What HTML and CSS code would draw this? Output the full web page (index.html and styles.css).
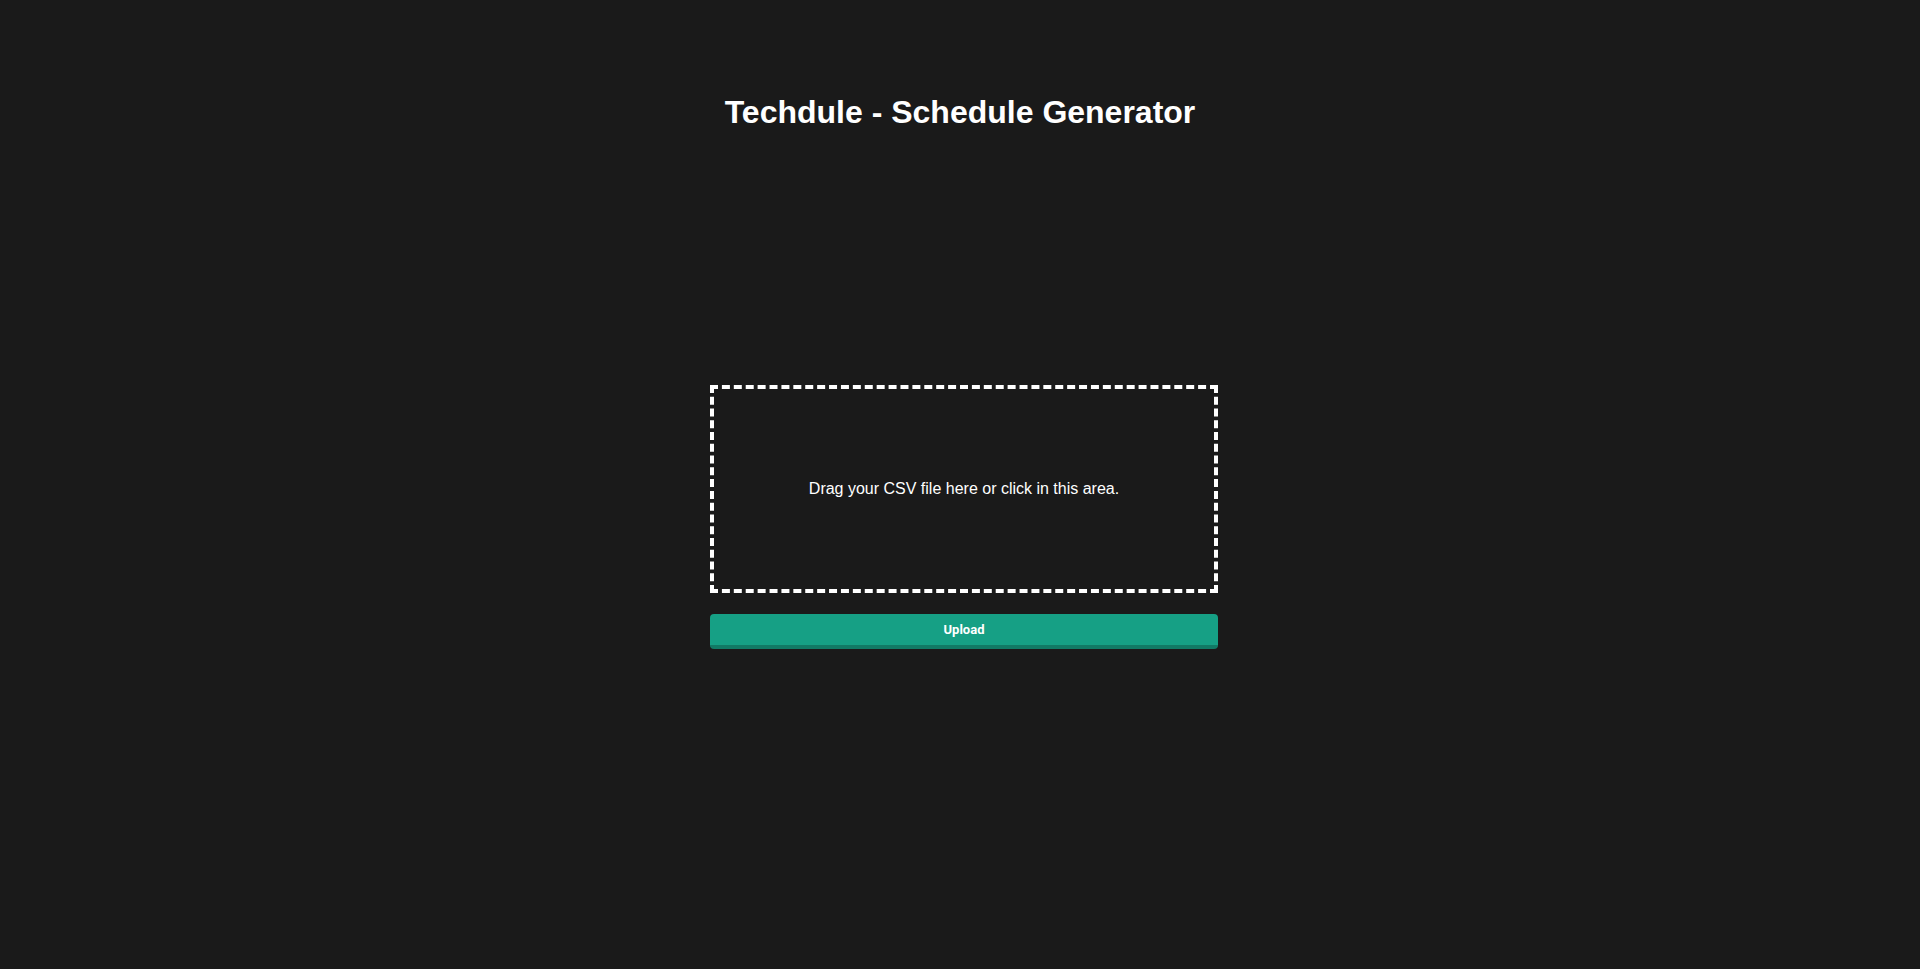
FILE: index.html
```html
<!DOCTYPE html>
<html lang="en">
<head>
<meta charset="utf-8">
<title>Techdule - Schedule Generator</title>
<link rel="stylesheet" href="styles.css">
</head>
<body>
<h1 class="title">Techdule - Schedule Generator</h1>
<form class="upload-form">
  <div class="dropzone">
    <p class="dropzone-text">Drag your CSV file here or click in this area.</p>
  </div>
  <button type="button" class="upload-btn">Upload</button>
</form>
</body>
</html>
```
FILE: styles.css
```css
html, body {
  margin: 0;
  padding: 0;
  background: #1a1a1a;
  color: #ffffff;
  font-family: "Liberation Sans", Arial, sans-serif;
}
body {
  padding-top: 94px;
  min-height: 969px;
  box-sizing: border-box;
}
.title {
  margin: 0;
  text-align: center;
  font-size: 32px;
  line-height: 37px;
  font-weight: bold;
}
.upload-form {
  width: 508px;
  margin-top: 254px;
  margin-left: calc(50% - 250px);
}
.dropzone {
  box-sizing: border-box;
  height: 208px;
  border: 4px dashed #ffffff;
  display: flex;
  align-items: center;
  justify-content: center;
}
.dropzone-text {
  margin: 0;
  font-size: 16px;
  line-height: 18px;
}
.upload-btn {
  display: block;
  width: 100%;
  height: 35px;
  margin-top: 21px;
  border: none;
  border-bottom: 4px solid #117a65;
  border-radius: 4px;
  background: #16a085;
  color: #ffffff;
  font-family: Roboto, "Liberation Sans", sans-serif;
  font-weight: bold;
  font-size: 13px;
  padding: 0;
  cursor: pointer;
}
```
